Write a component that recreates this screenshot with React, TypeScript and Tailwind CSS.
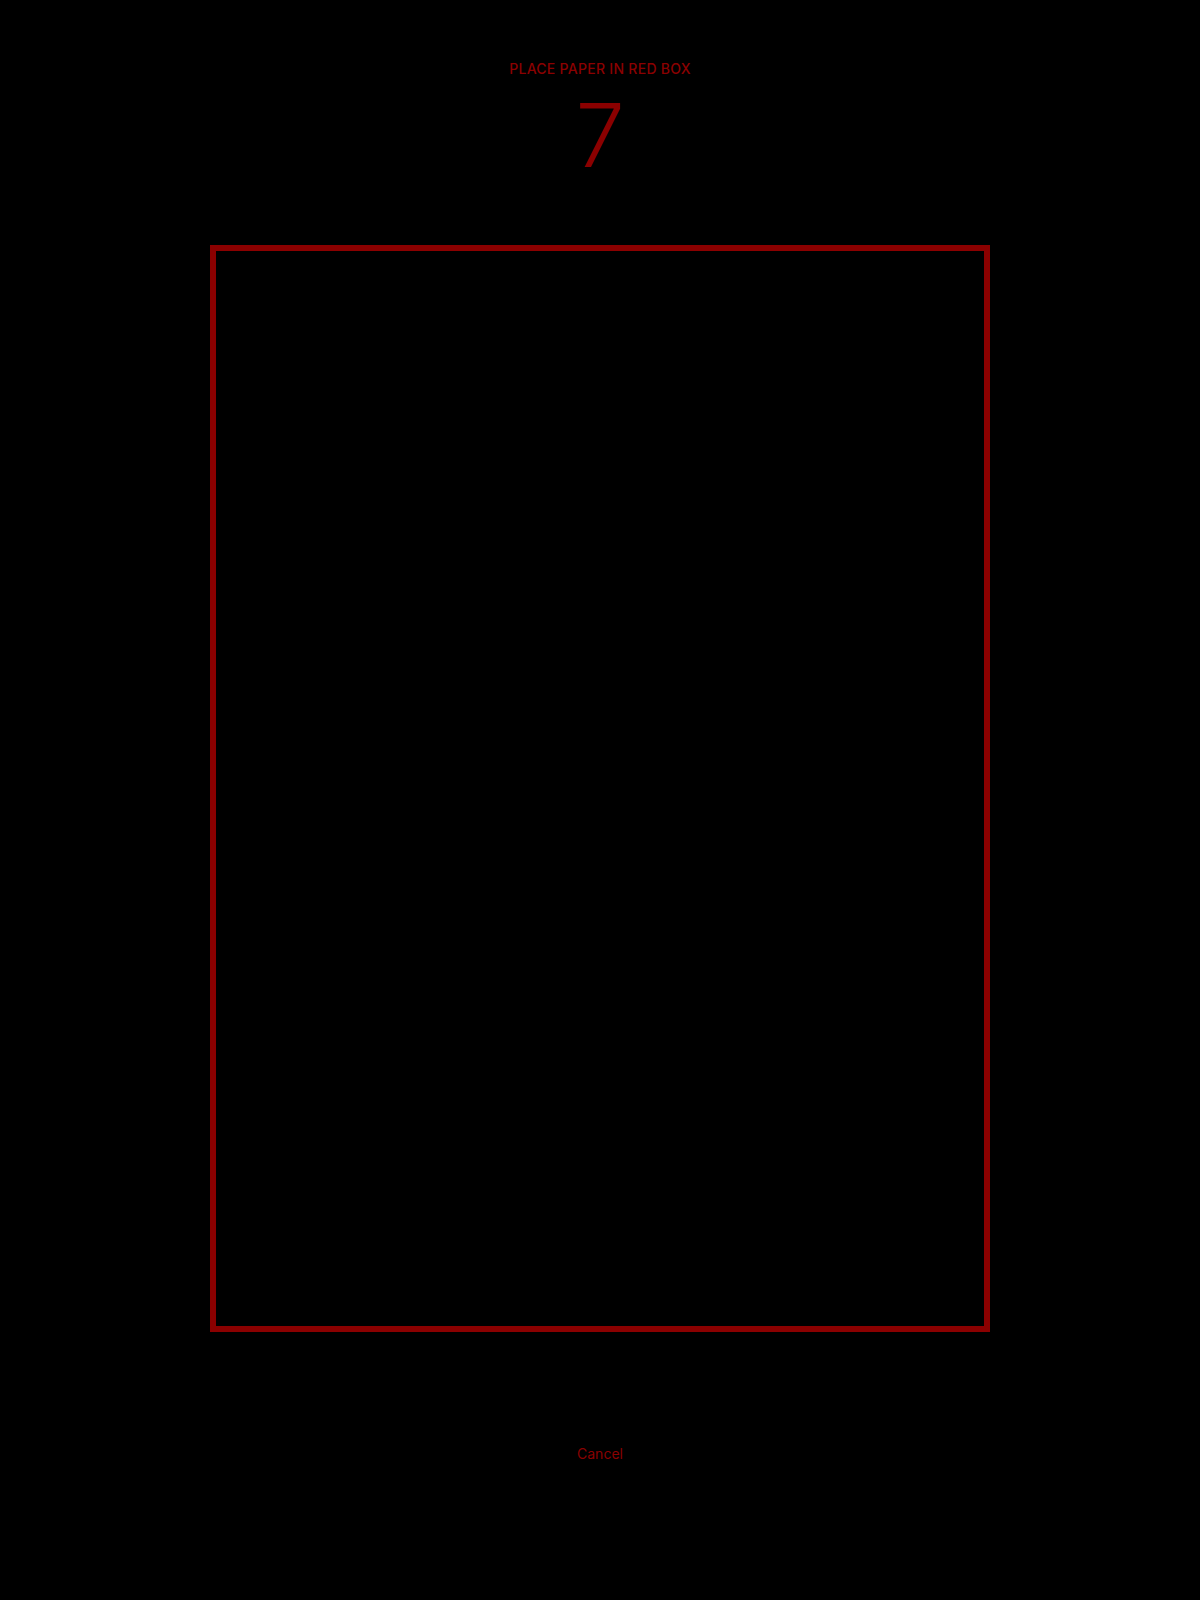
export default function App() {
  return (
    <div
      className="flex min-h-[1600px] w-full flex-col items-center bg-black pt-[59px] text-[#8b0000]"
      style={{ fontFamily: 'Inter, "Noto Sans", sans-serif' }}
    >
      <p className="text-[14px] leading-[20px] font-medium tracking-[0.02em]">PLACE PAPER IN RED BOX</p>
      <div className="mt-[12px] text-[88px] leading-[88px] font-light">7</div>
      <div className="mt-[66px] h-[1087px] w-[780px] border-[6px] border-[#8b0000]" />
      <button type="button" className="mt-[112px] text-[14px] leading-[20px] text-[#8b0000]">
        Cancel
      </button>
    </div>
  )
}
